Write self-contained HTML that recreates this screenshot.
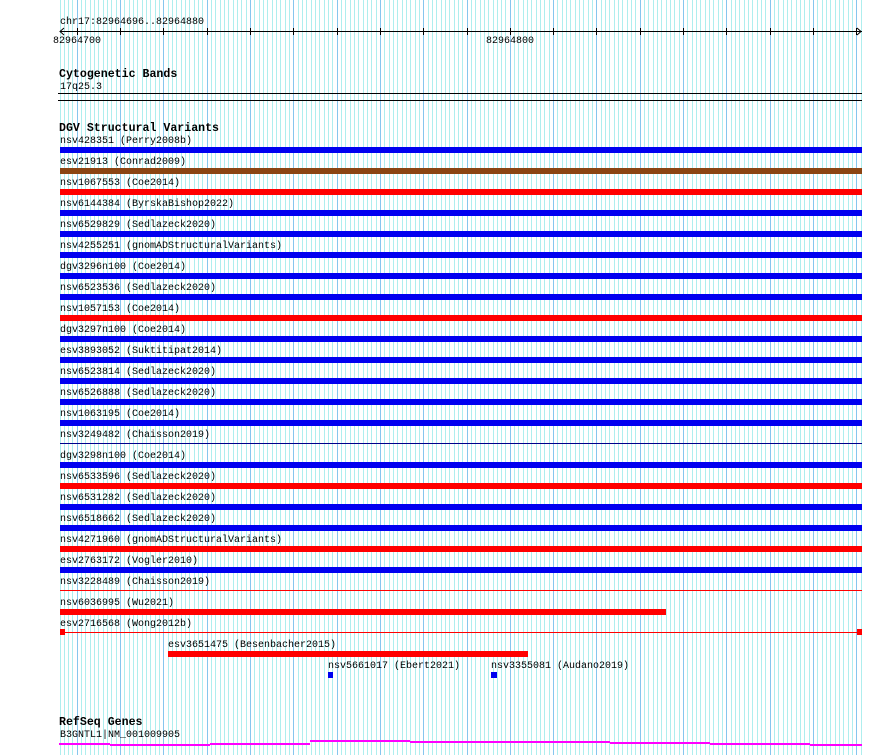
<!DOCTYPE html>
<html><head><meta charset="utf-8"><style>
html,body{margin:0;padding:0;background:#fff;width:890px;height:755px;overflow:hidden;position:relative}
.t{position:absolute;font-family:"Liberation Mono",monospace;font-size:10px;line-height:11px;color:#000;white-space:pre}
.b{position:absolute;font-family:"Liberation Mono",monospace;font-size:11.6px;font-weight:bold;line-height:12px;color:#000;white-space:pre}
svg{position:absolute;left:0;top:0}
</style></head><body>
<svg id="g" width="890" height="755"></svg>
<div class="t" style="left:60px;top:17px">chr17:82964696..82964880</div>
<div class="t" style="left:53px;top:36px">82964700</div>
<div class="t" style="left:486px;top:36px">82964800</div>
<div class="b" style="left:59px;top:69px">Cytogenetic Bands</div>
<div class="t" style="left:60px;top:82px">17q25.3</div>
<div class="b" style="left:59px;top:123px">DGV Structural Variants</div>
<div id="labels"></div>
<div class="t" style="left:168px;top:640px">esv3651475 (Besenbacher2015)</div>
<div class="t" style="left:328px;top:661px">nsv5661017 (Ebert2021)</div>
<div class="t" style="left:491px;top:661px">nsv3355081 (Audano2019)</div>
<div class="b" style="left:59px;top:717px">RefSeq Genes</div>
<div class="t" style="left:60px;top:730px">B3GNTL1|NM_001009905</div>
<script>
var s='';
for(var k=0;k<=185;k++){var x=Math.floor(60+k*4.33);var d=(k%10==4);
s+='<rect x="'+x+'" y="0" width="1" height="755" fill="'+(d?'#86c6ee':'#aeeeee')+'"/>';}
s+='<rect x="60" y="31" width="802" height="1" fill="#000"/>';
s+='<path d="M64 28 L60 31.5 L64 35 M857 28 L861 31.5 L857 35" stroke="#000" fill="none"/>';
for(var k=4;k<=185;k+=10){var x=Math.floor(60+k*4.33);s+='<rect x="'+x+'" y="28" width="1" height="7" fill="#000"/>';}
s+='<rect x="58" y="93" width="804" height="1" fill="#000"/><rect x="58" y="100" width="804" height="1" fill="#000"/>';
var rows=[["nsv428351 (Perry2008b)","#0000f0"],["esv21913 (Conrad2009)","#8b4513"],["nsv1067553 (Coe2014)","#ff0000"],
["nsv6144384 (ByrskaBishop2022)","#0000f0"],["nsv6529829 (Sedlazeck2020)","#0000f0"],["nsv4255251 (gnomADStructuralVariants)","#0000f0"],
["dgv3296n100 (Coe2014)","#0000f0"],["nsv6523536 (Sedlazeck2020)","#0000f0"],["nsv1057153 (Coe2014)","#ff0000"],
["dgv3297n100 (Coe2014)","#0000f0"],["esv3893052 (Suktitipat2014)","#0000f0"],["nsv6523814 (Sedlazeck2020)","#0000f0"],
["nsv6526888 (Sedlazeck2020)","#0000f0"],["nsv1063195 (Coe2014)","#0000f0"],["nsv3249482 (Chaisson2019)","thin","#00008b"],
["dgv3298n100 (Coe2014)","#0000f0"],["nsv6533596 (Sedlazeck2020)","#ff0000"],["nsv6531282 (Sedlazeck2020)","#0000f0"],
["nsv6518662 (Sedlazeck2020)","#0000f0"],["nsv4271960 (gnomADStructuralVariants)","#ff0000"],["esv2763172 (Vogler2010)","#0000f0"],
["nsv3228489 (Chaisson2019)","thin","#ff0000"],["nsv6036995 (Wu2021)","#ff0000",666],["esv2716568 (Wong2012b)","sq","#ff0000"]];
var h='';
for(var i=0;i<rows.length;i++){var r=rows[i];var ly=135+21*i;var by=147+21*i;
h+='<div class="t" style="left:60px;top:'+(ly+1)+'px">'+r[0]+'</div>';
if(r[1]=='thin'){s+='<rect x="60" y="'+(by+2)+'" width="802" height="1" fill="'+r[2]+'"/>';}
else if(r[1]=='sq'){s+='<rect x="60" y="'+(by+2)+'" width="802" height="1" fill="#ff0000"/><rect x="60" y="'+(by-1)+'" width="5" height="6" fill="#ff0000"/><rect x="857" y="'+(by-1)+'" width="5" height="6" fill="#ff0000"/>';}
else{var e=r[2]||862;s+='<rect x="60" y="'+by+'" width="'+(e-60)+'" height="6" fill="'+r[1]+'"/>';}
}
document.getElementById('labels').innerHTML=h;
s+='<rect x="168" y="651" width="360" height="6" fill="#ff0000"/>';
s+='<rect x="328" y="672" width="5" height="6" fill="#0000f0"/><rect x="491" y="672" width="6" height="6" fill="#0000f0"/>';
var m=[[59,110,743],[110,210,744],[210,310,743],[310,410,740],[410,610,741],[610,710,742],[710,810,743],[810,862,744]];
for(var j=0;j<m.length;j++){s+='<rect x="'+m[j][0]+'" y="'+m[j][2]+'" width="'+(m[j][1]-m[j][0])+'" height="2" fill="#ff00ff"/>';}
document.getElementById('g').innerHTML=s;
</script>
</body></html>
